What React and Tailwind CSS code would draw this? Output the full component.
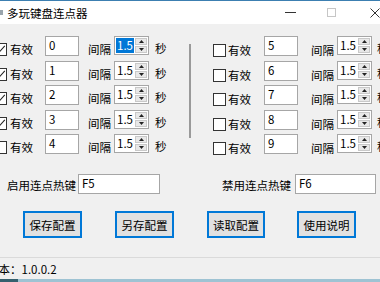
import React from "react";

const leftRows = [
  { value: "0", checked: true, selected: true, h: "h-[25px]" },
  { value: "1", checked: true, h: "h-[24px]" },
  { value: "2", checked: true, h: "h-[25px]" },
  { value: "3", checked: true, h: "h-[24px]" },
  { value: "4", checked: false, h: "h-[25px]" },
];

const rightRows = [
  { value: "5", h: "h-[25px]" },
  { value: "6", h: "h-[24px]" },
  { value: "7", h: "h-[25px]" },
  { value: "8", h: "h-[24px]" },
  { value: "9", h: "h-[25px]" },
];

function Checkbox({ checked, className = "" }) {
  return (
    <div
      className={`flex h-[13px] w-[13px] shrink-0 items-center justify-center border border-[#333333] bg-white ${className}`}
    >
      {checked && (
        <svg viewBox="0 0 11 11" className="h-[11px] w-[11px]">
          <path d="M1.5 5.5 L4.2 8.2 L9.8 1.8" fill="none" stroke="#222" strokeWidth="1.1" />
        </svg>
      )}
    </div>
  );
}

function TextBox({ value, className = "" }) {
  return (
    <div
      className={`h-[20px] shrink-0 border border-[#a6a6a6] bg-white pl-[3px] pt-[1px] leading-[14px] ${className}`}
    >
      {value}
    </div>
  );
}

function Spin({ selected }) {
  return (
    <div className="flex h-[19px] w-[35px] shrink-0 border border-[#a6a6a6] bg-white">
      <div className="flex-1 pl-[1px] pt-[1px]">
        <span
          className={
            selected
              ? "inline-block h-[15px] bg-[#0078d7] px-[1px] leading-[15px] text-white"
              : "inline-block h-[15px] px-[1px] leading-[15px]"
          }
        >
          1.5
        </span>
      </div>
      <div className="flex w-[14px] flex-col gap-[1px] p-[1px]">
        <div className="flex flex-1 items-center justify-center border border-[#c9c9c9] bg-[#e8e8e8]">
          <svg viewBox="0 0 5 3" className="h-[3px] w-[5px]">
            <path d="M0 3 L2.5 0 L5 3 Z" fill="#222" />
          </svg>
        </div>
        <div className="flex flex-1 items-center justify-center border border-[#c9c9c9] bg-[#e8e8e8]">
          <svg viewBox="0 0 5 3" className="h-[3px] w-[5px]">
            <path d="M0 0 L5 0 L2.5 3 Z" fill="#222" />
          </svg>
        </div>
      </div>
    </div>
  );
}

function Btn({ label, className = "" }) {
  return (
    <button
      className={`h-[27px] shrink-0 border-2 border-[#0078d7] bg-[#e1e1e1] leading-[14px] ${className}`}
    >
      {label}
    </button>
  );
}

export default function App() {
  return (
    <div className="relative h-[282px] w-[380px] overflow-hidden bg-[#f0f0f0] font-['Noto_Sans_CJK_SC',sans-serif] text-[11.5px] leading-[14px] text-black">
      {/* title bar */}
      <div className="flex h-[24px] items-center border-t border-[#3c7fb1] bg-white">
        <div className="h-[5px] w-[3px] bg-[#9aa5ad]" />
        <span className="ml-[4px]">多玩键盘连点器</span>
        <div className="ml-auto flex items-center">
          <div className="h-px w-[11px] bg-[#333]" />
          <div className="ml-[31px] h-[9px] w-[9px] border border-[#c6c6c6]" />
          <svg viewBox="0 0 10 10" className="ml-[34px] h-[10px] w-[10px]">
            <path d="M0.5 0.5 L9.5 9.5 M9.5 0.5 L0.5 9.5" stroke="#333" strokeWidth="1" />
          </svg>
        </div>
      </div>

      {/* key rows */}
      <div className="flex pt-[12px]">
        <div className="w-[189px] shrink-0">
          {leftRows.map((r) => (
            <div key={r.value} className={`flex items-start ${r.h}`}>
              <Checkbox checked={r.checked} className="ml-[-6px] mt-[7px]" />
              <span className="ml-[3px] mt-[6px] w-[24px] shrink-0">有效</span>
              <TextBox value={r.value} className="ml-[11px] w-[34px]" />
              <span className="ml-[9px] mt-[6px] w-[24px] shrink-0">间隔</span>
              <div className="ml-[2px]">
                <Spin selected={r.selected} />
              </div>
              <span className="ml-[6px] mt-[5px] shrink-0">秒</span>
            </div>
          ))}
        </div>
        <div className="mt-[8px] h-[94px] w-[2px] shrink-0 bg-[#9a9a9a]" />
        <div className="flex-1">
          {rightRows.map((r) => (
            <div key={r.value} className={`flex items-start ${r.h}`}>
              <Checkbox className="ml-[22px] mt-[8px]" />
              <span className="ml-[2px] mt-[7px] w-[24px] shrink-0">有效</span>
              <TextBox value={r.value} className="ml-[12px] w-[34px]" />
              <span className="ml-[13px] mt-[7px] w-[24px] shrink-0">间隔</span>
              <div className="ml-[2px]">
                <Spin />
              </div>
              <span className="ml-[5px] mt-[5px] shrink-0">秒</span>
            </div>
          ))}
        </div>
      </div>

      {/* hotkeys */}
      <div className="mt-[15px] flex h-[20px] items-center">
        <span className="ml-[7px] w-[71px] shrink-0 pt-[2px]">启用连点热键</span>
        <TextBox value="F5" className="w-[82px]" />
        <span className="ml-[62px] w-[73px] shrink-0 pt-[2px]">禁用连点热键</span>
        <TextBox value="F6" className="w-[81px]" />
      </div>

      {/* buttons */}
      <div className="mt-[17px] flex">
        <Btn label="保存配置" className="ml-[23px] w-[59px]" />
        <Btn label="另存配置" className="ml-[33px] w-[59px]" />
        <Btn label="读取配置" className="ml-[33px] w-[58px]" />
        <Btn label="使用说明" className="ml-[32px] w-[59px]" />
      </div>

      {/* status bar */}
      <div className="mt-[19px] flex h-[22px] items-center border-t border-[#dadada]">
        <span className="ml-[-13px]">版本：1.0.0.2</span>
      </div>
      <div className="flex h-[3px]">
        <div className="w-[18px] bg-[#35606e]" />
        <div className="flex-1 bg-[#9ec3d3]" />
      </div>
    </div>
  );
}
